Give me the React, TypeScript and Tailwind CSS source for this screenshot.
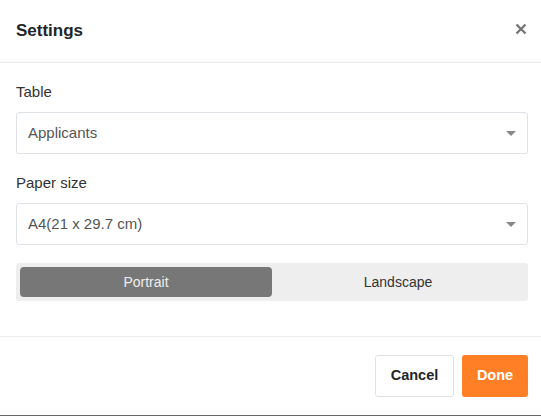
import React from "react";

function Caret() {
  return (
    <svg width="10" height="5" viewBox="0 0 10 5" className="block">
      <path d="M0 0 L10 0 L5 5 Z" fill="#888" />
    </svg>
  );
}

function SelectBox({ value }: { value: string }) {
  return (
    <div className="flex h-[42px] items-center justify-between rounded-[3px] border border-[#dee2e6] bg-white pl-[11px] pr-[11px]">
      <span className="text-[15px] text-[#555]">{value}</span>
      <Caret />
    </div>
  );
}

export default function App() {
  return (
    <div
      className="flex h-[416px] w-[541px] flex-col border-b border-[#666] bg-white text-[#212529]"
      style={{ fontFamily: '"Liberation Sans", Arial, sans-serif' }}
    >
      <div className="flex h-[63px] shrink-0 items-center justify-between border-b border-[#e9ecef] pl-4 pr-[14px]">
        <span className="text-[17px] font-bold text-[#212529]">Settings</span>
        <svg width="12" height="12" viewBox="0 0 12 12" className="mb-[5px]">
          <path d="M1.5 1.5 L10.5 10.5 M10.5 1.5 L1.5 10.5" stroke="#777" strokeWidth="2.4" strokeLinecap="butt" />
        </svg>
      </div>
      <div className="flex flex-col pl-4 pr-[13px] pt-[18px]">
        <div className="mb-[10px] text-[15px] leading-[21px] text-[#333]">Table</div>
        <SelectBox value="Applicants" />
        <div className="mb-[10px] mt-[18px] text-[15px] leading-[21px] text-[#333]">Paper size</div>
        <SelectBox value="A4(21 x 29.7 cm)" />
        <div className="mt-[18px] flex h-[38px] rounded-[3px] bg-[#eee] p-[4px]">
          <div className="flex flex-1 items-center justify-center rounded-[4px] bg-[#777] text-[14px] text-[#eee]">
            Portrait
          </div>
          <div className="flex flex-1 items-center justify-center text-[14px] text-[#333]">Landscape</div>
        </div>
      </div>
      <div className="mt-[35px] flex justify-end gap-[8px] border-t border-[#e9ecef] pl-4 pr-[13px] pt-[18px]">
        <button className="flex h-[42px] w-[79px] items-center justify-center rounded-[3px] border border-[#dee2e6] bg-white text-[14.5px] font-bold text-[#212529]">
          Cancel
        </button>
        <button className="flex h-[42px] w-[66px] items-center justify-center rounded-[3px] bg-[#ff7f27] text-[14.5px] font-bold text-white">
          Done
        </button>
      </div>
    </div>
  );
}
